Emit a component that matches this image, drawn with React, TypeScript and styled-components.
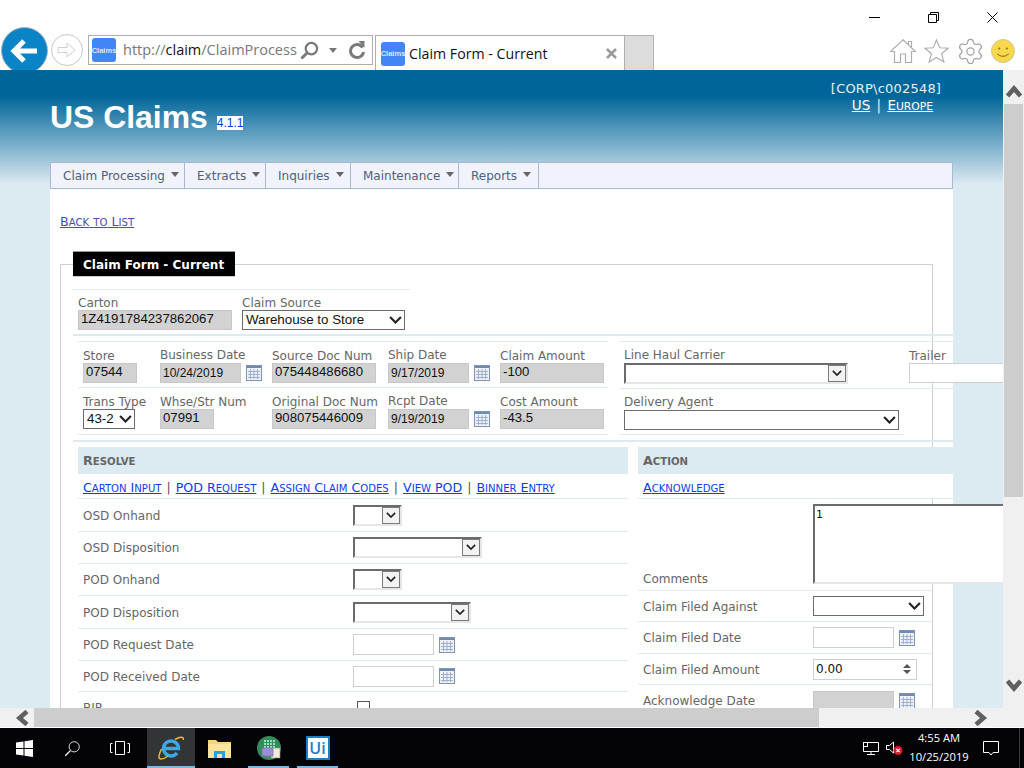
import React from "react";
import styled, { createGlobalStyle } from "styled-components";
import { Settings } from "lucide-react";

const GlobalStyle = createGlobalStyle`
  html, body { margin: 0; padding: 0; background: #fff; overflow: hidden; }
  * { box-sizing: border-box; }
`;

const TAHOMA = `"DejaVu Sans", Tahoma, sans-serif`;
const ARIAL = `"Liberation Sans", Arial, sans-serif`;
const SEGOE = `"Open Sans", "Noto Sans", sans-serif`;

/* ---------- small caps: the page's font shows lower case at 4/5 of the capitals ---------- */

const SmallLetters = styled.span`
  font-size: 0.8em;
  text-transform: uppercase;
`;

const SmallCaps = ({ text }: { text: string }) => (
  <>
    {text.split(/([a-z]+)/).map((part, i) =>
      /^[a-z]/.test(part) ? <SmallLetters key={i}>{part}</SmallLetters> : part
    )}
  </>
);

/* ---------- small drawings ---------- */

const Chevron = ({ size = 13 }: { size?: number }) => (
  <svg width={size} height={(size * 8) / 12} viewBox="0 0 12 8">
    <polyline points="1,1 6,6 11,1" fill="none" stroke="#222" strokeWidth="2" />
  </svg>
);

const ScrollArrow = ({ dir }: { dir: "up" | "down" | "left" | "right" }) => {
  const rotate = { up: 0, right: 90, down: 180, left: 270 }[dir];
  return (
    <svg width="16" height="16" viewBox="0 0 16 16" style={{ transform: `rotate(${rotate}deg)` }}>
      <polyline points="1.5,13 8,5.5 14.5,13" fill="none" stroke="#606060" strokeWidth="4.6" />
    </svg>
  );
};

const CalendarIcon = () => (
  <CalendarSvg width="16" height="16" viewBox="0 0 16 16">
    <rect x="0.5" y="0.5" width="15" height="15" fill="#eef2f8" stroke="#7d94b5" />
    <rect x="1" y="1" width="14" height="2" fill="#6f8bb0" />
    <path d="M2 6.5H14M2 9.5H14M2 12.5H14M4.5 4V14M8 4V14M11.5 4V14" stroke="#9db1cc" strokeWidth="1" />
  </CalendarSvg>
);

const BackArrow = () => (
  <svg width="30" height="30" viewBox="0 0 30 30">
    <path d="M27 15H5M14 5L4 15L14 25" fill="none" stroke="#fff" strokeWidth="5" />
  </svg>
);

const ForwardArrow = () => (
  <svg width="20" height="18" viewBox="0 0 20 18">
    <path d="M1 6.5H10V2L18 9L10 16V11.5H1Z" fill="none" stroke="#cfcfcf" strokeWidth="1" />
  </svg>
);

const MagnifierIcon = ({ size, color, weight }: { size: number; color: string; weight: number }) => (
  <svg width={size} height={size} viewBox="0 0 20 20">
    <circle cx="12" cy="8" r="6" fill="none" stroke={color} strokeWidth={weight} />
    <line x1="7.5" y1="12.5" x2="1.5" y2="18.5" stroke={color} strokeWidth={weight + 0.6} />
  </svg>
);

const RefreshIcon = () => (
  <svg width="18" height="20" viewBox="0 0 18 20">
    <path d="M14.5 7.5A6.5 6.5 0 1 0 15.5 12" fill="none" stroke="#7a7a7a" strokeWidth="3" />
    <path d="M10.5 1L16.5 1V8Z" fill="#7a7a7a" />
  </svg>
);

const TabCloseIcon = () => (
  <svg width="11" height="11" viewBox="0 0 11 11">
    <path d="M1 1L10 10M10 1L1 10" stroke="#9a9a9a" strokeWidth="2.6" />
  </svg>
);

const HomeIcon = () => (
  <svg width="26" height="24" viewBox="0 0 26 24">
    <path
      d="M13 0.8L25.5 12.5H21.5V23.5H15.5V15H10.5V23.5H4.5V12.5H0.5Z M18.5 6.5V2.5H21.5V9.5"
      fill="none"
      stroke="#adadad"
      strokeWidth="1.2"
    />
  </svg>
);

const StarIcon = () => (
  <svg width="25" height="24" viewBox="0 0 27 26">
    <polygon
      points="13.5,1 17,9.5 26,10 19,16 21.5,25 13.5,20 5.5,25 8,16 1,10 10,9.5"
      fill="none"
      stroke="#adadad"
      strokeWidth="1.2"
    />
  </svg>
);

const SmileIcon = () => (
  <svg width="24" height="24" viewBox="0 0 25 25">
    <circle cx="12.5" cy="12.5" r="12" fill="#f7d84b" stroke="#c9c9a0" />
    <circle cx="8.5" cy="10" r="1.2" fill="#8d7d2c" />
    <circle cx="16.5" cy="10" r="1.2" fill="#8d7d2c" />
    <path d="M6.5 15.5Q12.5 20.5 18.5 15.5" fill="none" stroke="#8d7d2c" strokeWidth="1.3" />
  </svg>
);

const MinimizeIcon = () => (
  <svg width="11" height="11" viewBox="0 0 11 11">
    <line x1="0" y1="5.5" x2="11" y2="5.5" stroke="#000" />
  </svg>
);

const RestoreIcon = () => (
  <svg width="11" height="11" viewBox="0 0 11 11">
    <path d="M0.5 2.5H8.5V10.5H0.5ZM2.5 2.5V0.5H10.5V8.5H8.5" fill="none" stroke="#000" />
  </svg>
);

const CloseIcon = () => (
  <svg width="11" height="11" viewBox="0 0 11 11">
    <path d="M0.5 0.5L10.5 10.5M10.5 0.5L0.5 10.5" stroke="#000" />
  </svg>
);

const WindowsLogo = () => (
  <svg width="17" height="17" viewBox="0 0 17 17">
    <path d="M0 2.5L7.5 1.4V8H0ZM8.5 1.3L17 0V8H8.5ZM0 9H7.5V15.6L0 14.5ZM8.5 9H17V17L8.5 15.7Z" fill="#fff" />
  </svg>
);

const TaskViewIcon = () => (
  <svg width="20" height="14" viewBox="0 0 20 14">
    <path d="M5.5 0.5H14.5V13.5H5.5ZM2.5 2.5H0.5V11.5H2.5M17.5 2.5H19.5V11.5H17.5" fill="none" stroke="#fff" />
  </svg>
);

const IeLogo = () => (
  <svg width="26" height="24" viewBox="0 0 26 24">
    <path d="M6 12.5H20.5A7.5 7.5 0 1 0 19 17" fill="none" stroke="#3aa9ea" strokeWidth="3.4" />
    <path d="M17 3.5C22 0.5 26 0.5 25.5 4" fill="none" stroke="#f2b632" strokeWidth="1.5" />
    <path d="M3.5 13C0.5 19 0 23 3 23C5 23 8 21.5 10 20" fill="none" stroke="#f2b632" strokeWidth="1.5" />
  </svg>
);

const FolderIcon = () => (
  <svg width="23" height="19" viewBox="0 0 23 19">
    <path d="M0 1H8L10 3H23V19H0Z" fill="#f6d67a" />
    <path d="M0 5H23V19H0Z" fill="#fbe39c" />
    <path d="M6 12H17V19H14V15H9V19H6Z" fill="#2aa0e2" />
  </svg>
);

const RemoteIcon = () => (
  <svg width="24" height="24" viewBox="0 0 24 24">
    <circle cx="12" cy="12" r="12" fill="#2f8f5b" />
    <path d="M7 5H18M7 8H18M7 11H18" stroke="#d8efe0" strokeWidth="1.5" strokeDasharray="2 1" />
    <rect x="14" y="12" width="9" height="10" fill="#efe9d8" stroke="#8a8a7a" strokeWidth="0.6" />
    <rect x="5" y="12" width="11" height="8" fill="#9a8fd8" stroke="#6f66aa" strokeWidth="0.6" />
    <rect x="8" y="20" width="5" height="2" fill="#6f7f78" />
  </svg>
);

const NetworkIcon = () => (
  <svg width="16" height="13" viewBox="0 0 16 13">
    <path d="M0.5 0.5H15.5V9.5H0.5ZM8 9.5V12.5M4 12.5H12" fill="none" stroke="#fff" />
    <rect x="0.5" y="0.5" width="4" height="4" fill="#000" stroke="#fff" />
  </svg>
);

const VolumeIcon = () => (
  <svg width="17" height="14" viewBox="0 0 17 14">
    <path d="M0.5 4.5H3.5L7.5 1V12L3.5 8.5H0.5Z" fill="none" stroke="#fff" />
    <circle cx="12" cy="9.5" r="4.5" fill="#d01c2c" />
    <path d="M10.3 7.8L13.7 11.2M13.7 7.8L10.3 11.2" stroke="#fff" strokeWidth="1.2" />
  </svg>
);

const NoticeIcon = () => (
  <svg width="16" height="15" viewBox="0 0 16 15">
    <path d="M0.5 0.5H15.5V11.5H10L8 14L6 11.5H0.5Z" fill="none" stroke="#fff" />
  </svg>
);

/* ---------- browser chrome ---------- */

const Desktop = styled.div`
  width: 1024px;
  height: 768px;
  display: flex;
  flex-direction: column;
  overflow: hidden;
  background: #fff;
`;

const Chrome = styled.header`
  height: 70px;
  flex-shrink: 0;
  overflow: hidden;
  background: #fff;
`;

const CaptionRow = styled.div`
  height: 27px;
  padding: 12px 2px 0 0;
  display: flex;
  justify-content: flex-end;
`;

const CaptionButton = styled.div`
  width: 59px;
  display: flex;
  justify-content: center;
  height: 11px;
`;

const NavRow = styled.div`
  height: 43px;
  padding-left: 1px;
  display: flex;
  align-items: flex-start;
`;

const BackButton = styled.div`
  width: 47px;
  height: 47px;
  flex-shrink: 0;
  border-radius: 50%;
  background: #0a84c6;
  border: 1px solid #9fb4bf;
  display: flex;
  align-items: center;
  justify-content: center;
`;

const ForwardButton = styled.div`
  width: 32px;
  height: 32px;
  margin: 7px 0 0 3px;
  flex-shrink: 0;
  border-radius: 50%;
  border: 1px solid #c8c8c8;
  display: flex;
  align-items: center;
  justify-content: center;
`;

const AddressBar = styled.div`
  width: 285px;
  height: 30px;
  margin: 8px 0 0 5px;
  flex-shrink: 0;
  border: 1px solid #adadad;
  display: flex;
  align-items: center;
  padding-left: 3px;
`;

const Favicon = styled.div`
  width: 24px;
  height: 24px;
  flex-shrink: 0;
  border-radius: 3px;
  background: #4285f4;
  color: #dfe9fb;
  font: bold 7.5px ${ARIAL};
  display: flex;
  align-items: center;
  justify-content: center;
`;

const AddressText = styled.div`
  width: 171px;
  margin-left: 7px;
  white-space: nowrap;
  font: 14.5px/20px ${SEGOE};
  color: #777;
  b {
    font-weight: 400;
    color: #111;
  }
`;

const AddressIcon = styled.div<{ $ml: number }>`
  margin-left: ${(p) => p.$ml}px;
  display: flex;
  align-items: center;
`;

const DropCaret = styled.div`
  width: 0;
  height: 0;
  border: 4.5px solid transparent;
  border-top: 5px solid #777;
  border-bottom: 0;
`;

const Tab = styled.div`
  width: 250px;
  height: 36px;
  margin: 8px 0 0 2px;
  flex-shrink: 0;
  border: 1px solid #adadad;
  border-bottom: 0;
  display: flex;
  align-items: center;
  padding: 0 7px 0 5px;
`;

const TabTitle = styled.div`
  flex: 1;
  margin-left: 4px;
  font: 14.2px ${SEGOE};
  color: #111;
  white-space: nowrap;
`;

const NewTab = styled.div`
  width: 29px;
  height: 36px;
  margin-top: 8px;
  background: #dcdcdc;
  border: 1px solid #b4b4b4;
  border-width: 1px 1px 0 0;
`;

const Tools = styled.div`
  margin: 12px 9px 0 auto;
  display: flex;
  align-items: center;
  gap: 8px;
`;

const GearWrap = styled.div`
  width: 24px;
  height: 24px;
  margin: 0 1px;
  display: flex;
  align-items: center;
  justify-content: center;
  svg {
    flex-shrink: 0;
  }
`;

/* ---------- page ---------- */

const Viewport = styled.div`
  height: 638px;
  flex-shrink: 0;
  display: flex;
`;

const PageArea = styled.main`
  width: 1003px;
  height: 638px;
  overflow: hidden;
  background: linear-gradient(#006699 0, #006699 26px, #a5c9dc 92px, #dceaf2 114px) no-repeat;
  background-color: #dceaf2;
  font: 12px/15px ${TAHOMA};
  color: #666;
`;

const PageHeader = styled.div`
  height: 92px;
  display: flex;
  justify-content: space-between;
  padding: 0 61px 0 50px;
`;

const Brand = styled.div`
  padding-top: 28px;
  display: flex;
  align-items: flex-end;
  height: 65px;
`;

const Title = styled.h1`
  margin: 0;
  font: bold 31.9px/36px ${ARIAL};
  color: #fff;
`;

const Version = styled.span`
  margin: 0 0 5px 9px;
  background: #fff;
  color: #0a3cf0;
  font: 12px/14px ${ARIAL};
`;

const UserBox = styled.div`
  padding-top: 11px;
  color: #e6f0f6;
  font: 13px/16px ${TAHOMA};
  letter-spacing: 0.2px;
  text-align: center;
  width: 112px;
`;

const SiteLinks = styled.div`
  height: 16px;
  font-size: 13.5px;
  letter-spacing: 0;
  text-align: center;
  padding-left: 13px;
  white-space: nowrap;
  a {
    color: #fff;
    text-decoration: underline;
  }
`;

const SiteBar = styled.span`
  margin: 0 2px;
`;

const MenuBar = styled.nav`
  width: 903px;
  height: 27px;
  margin-left: 50px;
  display: flex;
  background: #f0f3fb;
  border: 1px solid #a7b8cf;
`;

const MenuItem = styled.div<{ $w: number }>`
  width: ${(p) => p.$w}px;
  padding: 2px 0 0 12px;
  display: flex;
  align-items: center;
  gap: 6px;
  border-right: 1px solid #a7b8cf;
  color: #4f5f7c;
  white-space: nowrap;
`;

const MenuCaret = styled.span`
  width: 0;
  height: 0;
  margin-top: -4px;
  border: 4px solid transparent;
  border-top: 5px solid #666;
  border-bottom: 0;
`;

const Sheet = styled.div`
  width: 903px;
  min-height: 900px;
  margin-left: 50px;
  background: #fff;
  padding: 25px 0 0 10px;
`;

const BackLink = styled.a`
  display: block;
  height: 15px;
  color: #4a4ab8;
  text-decoration: underline;
  font-size: 12.7px;
`;

const FormSet = styled.fieldset`
  width: 873px;
  min-width: 0;
  margin: 22px 0 0;
  padding: 0;
  border: 1px solid #cfcfcf;
  min-height: 600px;
`;

const FormLegend = styled.legend`
  margin-left: 12px;
  padding: 0 10px;
  width: 162px;
  height: 26px;
  background: #000;
  border-top: 1px solid #999;
  border-bottom: 1px solid #ccc;
  color: #fff;
  font: bold 12px/26px ${TAHOMA};
  white-space: nowrap;
`;

const FormBody = styled.div`
  width: 880px;
  margin: 12px 0 0 12px;
`;

const CartonTable = styled.div`
  width: 337px;
  height: 45px;
  padding: 5px 0 0 5px;
  display: flex;
  gap: 10px;
  border-top: 1px solid #e0ebf2;
`;

const ThickRule = styled.div`
  width: 880px;
  height: 2px;
  background: #dceaf2;
`;

const HeaderTables = styled.div`
  display: flex;
  margin: 5px 0 5px 5px;
`;

const LeftTable = styled.div`
  width: 530px;
  flex-shrink: 0;
`;

const FieldRow = styled.div<{ $h: number }>`
  height: ${(p) => p.$h}px;
  padding-left: 5px;
  display: grid;
  grid-template-columns: 77px 112px 116px 112px 104px;
  border-top: 1px solid #e0ebf2;
`;

const RowEnd = styled.div<{ $w?: number }>`
  width: ${(p) => p.$w ?? 530}px;
  height: 1px;
  background: #e0ebf2;
`;

const Cell = styled.div<{ $pb?: number }>`
  display: flex;
  flex-direction: column;
  justify-content: flex-end;
  padding-bottom: ${(p) => p.$pb ?? 4}px;
  white-space: nowrap;
`;

const RightTable = styled.div`
  width: 334px;
  margin-left: 11px;
  flex-shrink: 0;
`;

const RightRow = styled.div<{ $h: number }>`
  height: ${(p) => p.$h}px;
  padding-left: 5px;
  display: flex;
  border-top: 1px solid #e0ebf2;
`;

const FixedCell = styled(Cell)<{ $w: number }>`
  width: ${(p) => p.$w}px;
  flex-shrink: 0;
`;

const Label = styled.span<{ $raised?: boolean }>`
  display: block;
  margin-bottom: ${(p) => (p.$raised ? 0 : -1)}px;
`;

const DateWrap = styled.div`
  display: flex;
  align-items: center;
  gap: 5px;
`;

const CalendarSvg = styled.svg`
  flex-shrink: 0;
  display: block;
`;

const ReadOnly = styled.div<{ $w: number; $small?: boolean }>`
  width: ${(p) => p.$w}px;
  height: 20px;
  background: #d2d2d2;
  border: 1px solid #c8c8c8;
  padding-left: 2px;
  font: ${(p) => (p.$small ? "12px/18px" : "13.2px/16px")} ${ARIAL};
  color: #111;
  flex-shrink: 0;
`;

const TextBox = styled.input<{ $w: number; $h?: number }>`
  display: block;
  width: ${(p) => p.$w}px;
  height: ${(p) => p.$h ?? 21}px;
  border: 1px solid #cfcfcf;
  outline: none;
  padding: 0 2px;
  background: #fff;
  flex-shrink: 0;
`;

const FlatSelect = styled.div<{ $w: number }>`
  width: ${(p) => p.$w}px;
  height: 20px;
  border: 1px solid #6b6b6b;
  background: #fff;
  display: flex;
  align-items: center;
  justify-content: space-between;
  padding: 0 2px 2px 3px;
  font: 13.33px ${ARIAL};
  color: #111;
  white-space: nowrap;
  svg {
    margin-top: 2px;
  }
`;

const SunkenSelect = styled.div<{ $w: number }>`
  width: ${(p) => p.$w}px;
  height: 21px;
  display: flex;
  justify-content: flex-end;
  background: #fff;
  border-style: solid;
  border-width: 2px;
  border-color: #6b6b6b #e6e6e6 #e6e6e6 #6b6b6b;
  flex-shrink: 0;
`;

const SelectArrow = styled.div`
  width: 18px;
  height: 17px;
  background: #f2f2f2;
  border: 1px solid #7a7a7a;
  display: flex;
  align-items: center;
  justify-content: center;
`;

const Columns = styled.div`
  display: flex;
  gap: 10px;
  margin: 5px 0 0 5px;
`;

const ResolveColumn = styled.section`
  width: 550px;
  flex-shrink: 0;
`;

const ActionColumn = styled.section`
  width: 315px;
  flex-shrink: 0;
`;

const SectionHead = styled.h2`
  margin: 0;
  height: 27px;
  padding-left: 5px;
  background: #dceaf2;
  font: bold 12.7px/28px ${TAHOMA};
  color: #666;
`;

const LinkRow = styled.div`
  height: 25px;
  padding: 6px 0 0 5px;
  background: #fff;
  border-bottom: 1px solid #e0ebf2;
  font-size: 12.6px;
  white-space: nowrap;
  a {
    color: #0a3cf0;
    text-decoration: underline;
  }
`;

const Bar = styled.span`
  margin: 0 5px;
  color: #555;
`;

const FormRow = styled.div<{ $h: number; $col?: number }>`
  height: ${(p) => p.$h}px;
  padding-left: 5px;
  display: grid;
  grid-template-columns: ${(p) => p.$col ?? 270}px 1fr;
  align-items: center;
  border-bottom: 1px solid #e0ebf2;
`;

const RowLabel = styled.span`
  margin-top: 2px;
`;

const ActionRows = styled.div`
  width: 294px;
`;

const CommentRow = styled.div`
  height: 92px;
  padding-left: 5px;
  display: grid;
  grid-template-columns: 170px 1fr;
  align-items: end;
  border-bottom: 1px solid #e0ebf2;
`;

const CommentLabel = styled.span`
  padding-bottom: 3px;
`;

const CommentBox = styled.textarea`
  display: block;
  width: 240px;
  height: 80px;
  margin-bottom: 6px;
  padding: 2px 1px;
  resize: none;
  outline: none;
  overflow: hidden;
  background: #fff;
  border-style: solid;
  border-width: 2px;
  border-color: #6b6b6b #e6e6e6 #e6e6e6 #6b6b6b;
  font: 11px/13px "DejaVu Sans Mono", "Liberation Mono", monospace;
  color: #111;
`;

const ControlLine = styled.div`
  display: flex;
  align-items: center;
  gap: 5px;
`;

const SpinBox = styled.div`
  width: 104px;
  height: 21px;
  border: 1px solid #cfcfcf;
  display: flex;
  align-items: center;
  justify-content: space-between;
  padding: 0 5px 0 2px;
  color: #111;
  font-size: 12px;
`;

const SpinArrows = styled.div`
  display: flex;
  flex-direction: column;
  gap: 2px;
  span {
    width: 0;
    height: 0;
    border-left: 4px solid transparent;
    border-right: 4px solid transparent;
  }
  span:first-child {
    border-bottom: 4px solid #555;
  }
  span:last-child {
    border-top: 4px solid #555;
  }
`;

const CheckBox = styled.input`
  appearance: none;
  display: block;
  width: 13px;
  height: 13px;
  margin: 0 0 0 4px;
  border: 1px solid #555;
  background: #fff;
`;

/* ---------- scrollbars ---------- */

const VScroll = styled.div`
  width: 21px;
  height: 638px;
  background: #f0f0f0;
  display: flex;
  flex-direction: column;
  align-items: center;
`;

const VArrowTop = styled.div`
  height: 34px;
  padding-top: 8px;
  display: flex;
  align-items: center;
  justify-content: center;
  flex-shrink: 0;
`;

const VArrowBottom = styled(VArrowTop)`
  margin-top: auto;
  padding: 0 0 10px;
`;

const VThumb = styled.div`
  width: 19px;
  height: 393px;
  background: #cdcdcd;
`;

const HScroll = styled.div`
  height: 20px;
  flex-shrink: 0;
  background: #f0f0f0;
  display: flex;
  align-items: center;
  border-bottom: 1px solid #fff;
`;

const HArrow = styled.div`
  width: 34px;
  padding-left: 10px;
  display: flex;
  justify-content: center;
  flex-shrink: 0;
`;

const HThumb = styled.div`
  width: 785px;
  height: 19px;
  background: #cdcdcd;
`;

const HRight = styled.div`
  margin-left: 154px;
  display: flex;
`;

/* ---------- taskbar ---------- */

const Taskbar = styled.footer`
  height: 40px;
  flex-shrink: 0;
  background: #030308;
  display: flex;
  align-items: stretch;
`;

const TaskButton = styled.div<{ $active?: boolean; $running?: boolean; $w?: number }>`
  position: relative;
  width: ${(p) => p.$w ?? 48}px;
  flex-shrink: 0;
  display: flex;
  align-items: center;
  justify-content: center;
  background: ${(p) => (p.$active ? "#333436" : "transparent")};
  &::after {
    content: "";
    display: ${(p) => (p.$running ? "block" : "none")};
    position: absolute;
    left: ${(p) => (p.$active ? 0 : 4)}px;
    right: ${(p) => (p.$active ? 0 : 4)}px;
    bottom: 0;
    height: 2px;
    background: #76b9ed;
  }
`;

const TaskSpacer = styled.div`
  width: 3px;
`;

const UiLogo = styled.div`
  width: 24px;
  height: 24px;
  background: #fff;
  border: 2px solid #1c7fc4;
  color: #1c7fc4;
  font: 600 16px/20px ${SEGOE};
  text-align: center;
`;

const Tray = styled.div`
  margin-left: auto;
  display: flex;
  align-items: center;
  align-self: stretch;
`;

const TrayIcon = styled.div<{ $w: number }>`
  width: ${(p) => p.$w}px;
  display: flex;
  justify-content: center;
`;

const Clock = styled.div`
  width: 66px;
  padding-bottom: 2px;
  color: #fff;
  font: 11.2px/19px ${SEGOE};
  text-align: center;
  white-space: nowrap;
`;

const ShowDesktop = styled.div`
  width: 5px;
  margin-left: 9px;
  align-self: stretch;
  border-left: 1px solid #3a3a3a;
`;

/* ---------- data ---------- */

const menus = [
  { label: "Claim Processing", w: 134 },
  { label: "Extracts", w: 81 },
  { label: "Inquiries", w: 85 },
  { label: "Maintenance", w: 108 },
  { label: "Reports", w: 80 },
];

const resolveLinks = ["Carton Input", "POD Request", "Assign Claim Codes", "View POD", "Binner Entry"];

const DateField = ({ label, value }: { label: string; value: string }) => (
  <Cell>
    <Label $raised>{label}</Label>
    <DateWrap>
      <ReadOnly $w={81} $small>{value}</ReadOnly>
      <CalendarIcon />
    </DateWrap>
  </Cell>
);

const ValueField = ({ label, value, w }: { label: string; value: string; w: number }) => (
  <Cell>
    <Label>{label}</Label>
    <ReadOnly $w={w}>{value}</ReadOnly>
  </Cell>
);

const Sunken = ({ w }: { w: number }) => (
  <SunkenSelect $w={w}>
    <SelectArrow>
      <Chevron size={10} />
    </SelectArrow>
  </SunkenSelect>
);

const DateInput = () => (
  <ControlLine>
    <TextBox $w={81} />
    <CalendarIcon />
  </ControlLine>
);

export default function App() {
  return (
    <>
      <GlobalStyle />
      <Desktop>
        <Chrome>
          <CaptionRow>
            <CaptionButton><MinimizeIcon /></CaptionButton>
            <CaptionButton><RestoreIcon /></CaptionButton>
            <CaptionButton><CloseIcon /></CaptionButton>
          </CaptionRow>
          <NavRow>
            <BackButton><BackArrow /></BackButton>
            <ForwardButton><ForwardArrow /></ForwardButton>
            <AddressBar>
              <Favicon>Claims</Favicon>
              <AddressText>http://<b>claim</b>/ClaimProcess</AddressText>
              <AddressIcon $ml={6}><MagnifierIcon size={19} color="#7a7a7a" weight={2.4} /></AddressIcon>
              <AddressIcon $ml={10}><DropCaret /></AddressIcon>
              <AddressIcon $ml={11}><RefreshIcon /></AddressIcon>
            </AddressBar>
            <Tab>
              <Favicon>Claims</Favicon>
              <TabTitle>Claim Form - Current</TabTitle>
              <TabCloseIcon />
            </Tab>
            <NewTab />
            <Tools>
              <HomeIcon />
              <StarIcon />
              <GearWrap>
                <Settings size={29} color="#a0a0a0" strokeWidth={1} />
              </GearWrap>
              <SmileIcon />
            </Tools>
          </NavRow>
        </Chrome>

        <Viewport>
          <PageArea>
            <PageHeader>
              <Brand>
                <Title>US Claims</Title>
                <Version>4.1.1</Version>
              </Brand>
              <UserBox>
                [CORP\c002548]
                <SiteLinks>
                  <a href="#us">US</a> <SiteBar>|</SiteBar> <a href="#europe"><SmallCaps text="Europe" /></a>
                </SiteLinks>
              </UserBox>
            </PageHeader>

            <MenuBar>
              {menus.map((m) => (
                <MenuItem key={m.label} $w={m.w}>
                  {m.label}
                  <MenuCaret />
                </MenuItem>
              ))}
            </MenuBar>

            <Sheet>
              <BackLink href="#list"><SmallCaps text="Back to List" /></BackLink>

              <FormSet>
                <FormLegend>Claim Form - Current</FormLegend>
                <FormBody>
                  <CartonTable>
                    <Cell>
                      <Label>Carton</Label>
                      <ReadOnly $w={154}>1Z4191784237862067</ReadOnly>
                    </Cell>
                    <Cell>
                      <Label>Claim Source</Label>
                      <FlatSelect $w={163}>
                        Warehouse to Store
                        <Chevron />
                      </FlatSelect>
                    </Cell>
                  </CartonTable>
                  <ThickRule />

                  <HeaderTables>
                    <LeftTable>
                      <FieldRow $h={46}>
                        <ValueField label="Store" value="07544" w={54} />
                        <DateField label="Business Date" value="10/24/2019" />
                        <ValueField label="Source Doc Num" value="075448486680" w={104} />
                        <DateField label="Ship Date" value="9/17/2019" />
                        <ValueField label="Claim Amount" value="-100" w={104} />
                      </FieldRow>
                      <FieldRow $h={47}>
                        <Cell $pb={5}>
                          <Label>Trans Type</Label>
                          <FlatSelect $w={52}>
                            43-2
                            <Chevron />
                          </FlatSelect>
                        </Cell>
                        <Cell $pb={5}>
                          <Label>Whse/Str Num</Label>
                          <ReadOnly $w={54}>07991</ReadOnly>
                        </Cell>
                        <Cell $pb={5}>
                          <Label>Original Doc Num</Label>
                          <ReadOnly $w={104}>908075446009</ReadOnly>
                        </Cell>
                        <Cell $pb={5}>
                          <Label $raised>Rcpt Date</Label>
                          <DateWrap>
                            <ReadOnly $w={81} $small>9/19/2019</ReadOnly>
                            <CalendarIcon />
                          </DateWrap>
                        </Cell>
                        <Cell $pb={5}>
                          <Label>Cost Amount</Label>
                          <ReadOnly $w={104}>-43.5</ReadOnly>
                        </Cell>
                      </FieldRow>
                      <RowEnd />
                    </LeftTable>
                    <RightTable>
                      <RightRow $h={47}>
                        <FixedCell $w={285} $pb={4}>
                          <Label $raised>Line Haul Carrier</Label>
                          <Sunken w={224} />
                        </FixedCell>
                        <FixedCell $w={100} $pb={5}>
                          <Label>Trailer</Label>
                          <TextBox $w={100} $h={20} />
                        </FixedCell>
                      </RightRow>
                      <RightRow $h={46}>
                        <FixedCell $w={285} $pb={4}>
                          <Label $raised>Delivery Agent</Label>
                          <FlatSelect $w={275}>
                            &nbsp;
                            <Chevron />
                          </FlatSelect>
                        </FixedCell>
                      </RightRow>
                      <RowEnd $w={284} />
                    </RightTable>
                  </HeaderTables>
                  <ThickRule />

                  <Columns>
                    <ResolveColumn>
                      <SectionHead><SmallCaps text="Resolve" /></SectionHead>
                      <LinkRow>
                        {resolveLinks.map((link, i) => (
                          <React.Fragment key={link}>
                            {i > 0 && <Bar>|</Bar>}
                            <a href="#resolve"><SmallCaps text={link} /></a>
                          </React.Fragment>
                        ))}
                      </LinkRow>
                      <FormRow $h={33}><RowLabel>OSD Onhand</RowLabel><Sunken w={49} /></FormRow>
                      <FormRow $h={32}><RowLabel>OSD Disposition</RowLabel><Sunken w={129} /></FormRow>
                      <FormRow $h={32}><RowLabel>POD Onhand</RowLabel><Sunken w={49} /></FormRow>
                      <FormRow $h={33}><RowLabel>POD Disposition</RowLabel><Sunken w={118} /></FormRow>
                      <FormRow $h={32}><RowLabel>POD Request Date</RowLabel><DateInput /></FormRow>
                      <FormRow $h={31}><RowLabel>POD Received Date</RowLabel><DateInput /></FormRow>
                      <FormRow $h={32}><RowLabel>BIP</RowLabel><CheckBox type="checkbox" /></FormRow>
                    </ResolveColumn>

                    <ActionColumn>
                      <SectionHead><SmallCaps text="Action" /></SectionHead>
                      <LinkRow><a href="#acknowledge"><SmallCaps text="Acknowledge" /></a></LinkRow>
                      <ActionRows>
                        <CommentRow>
                          <CommentLabel>Comments</CommentLabel>
                          <CommentBox defaultValue="1" readOnly />
                        </CommentRow>
                        <FormRow $h={31} $col={170}>
                          <RowLabel>Claim Filed Against</RowLabel>
                          <FlatSelect $w={111}>&nbsp;<Chevron /></FlatSelect>
                        </FormRow>
                        <FormRow $h={32} $col={170}><RowLabel>Claim Filed Date</RowLabel><DateInput /></FormRow>
                        <FormRow $h={31} $col={170}>
                          <RowLabel>Claim Filed Amount</RowLabel>
                          <SpinBox>
                            0.00
                            <SpinArrows><span /><span /></SpinArrows>
                          </SpinBox>
                        </FormRow>
                        <FormRow $h={32} $col={170}>
                          <RowLabel>Acknowledge Date</RowLabel>
                          <ControlLine>
                            <ReadOnly $w={81} />
                            <CalendarIcon />
                          </ControlLine>
                        </FormRow>
                      </ActionRows>
                    </ActionColumn>
                  </Columns>
                </FormBody>
              </FormSet>
            </Sheet>
          </PageArea>

          <VScroll>
            <VArrowTop><ScrollArrow dir="up" /></VArrowTop>
            <VThumb />
            <VArrowBottom><ScrollArrow dir="down" /></VArrowBottom>
          </VScroll>
        </Viewport>

        <HScroll>
          <HArrow><ScrollArrow dir="left" /></HArrow>
          <HThumb />
          <HRight><ScrollArrow dir="right" /></HRight>
        </HScroll>

        <Taskbar>
          <TaskButton><WindowsLogo /></TaskButton>
          <TaskButton><MagnifierIcon size={17} color="#fff" weight={1} /></TaskButton>
          <TaskButton><TaskViewIcon /></TaskButton>
          <TaskSpacer />
          <TaskButton $active $running><IeLogo /></TaskButton>
          <TaskButton $w={49}><FolderIcon /></TaskButton>
          <TaskButton $w={49} $running><RemoteIcon /></TaskButton>
          <TaskButton $w={49} $running><UiLogo>Ui</UiLogo></TaskButton>
          <Tray>
            <TrayIcon $w={22}><NetworkIcon /></TrayIcon>
            <TrayIcon $w={24}><VolumeIcon /></TrayIcon>
            <Clock>
              4:55 AM
              <br />
              10/25/2019
            </Clock>
            <TrayIcon $w={38}><NoticeIcon /></TrayIcon>
            <ShowDesktop />
          </Tray>
        </Taskbar>
      </Desktop>
    </>
  );
}
